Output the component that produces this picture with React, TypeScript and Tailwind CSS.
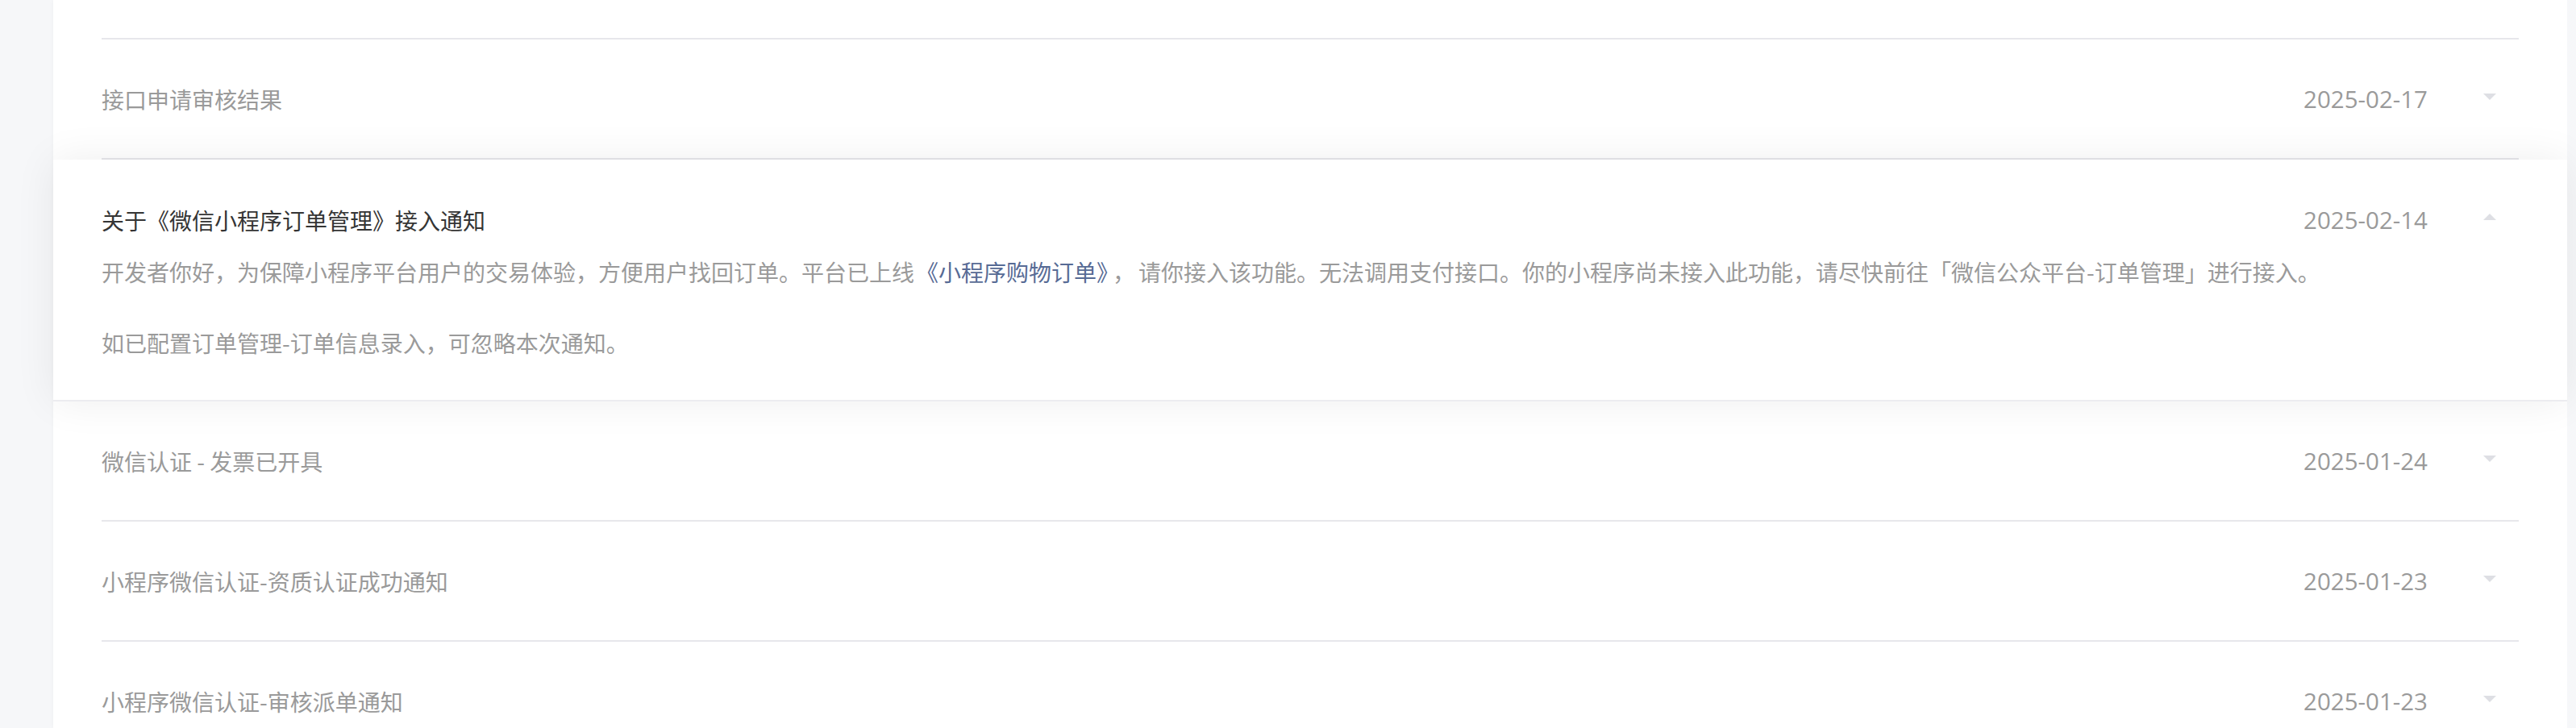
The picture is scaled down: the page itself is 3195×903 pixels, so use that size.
import React from "react";

const cjk = "font-['Noto_Sans_CJK_SC','Noto_Sans',sans-serif]";
const dateFont = "font-['Open_Sans','Noto_Sans',sans-serif]";

function Caret({ up = false }: { up?: boolean }) {
  return (
    <div className="ml-[41px] flex h-[44px] w-[72px] shrink-0 items-center justify-center">
      <svg width="16" height="8" viewBox="0 0 16 8" className={up ? "mb-[9px]" : "mb-[6px]"}>
        {up ? (
          <path d="M0 8 L16 8 L8 0 Z" fill="#dedfe4" />
        ) : (
          <path d="M0 0 L16 0 L8 8 Z" fill="#dedfe4" />
        )}
      </svg>
    </div>
  );
}

function Row({ title, date }: { title: string; date: string }) {
  return (
    <div className="px-[60px]">
      <div className="flex h-[149px] items-center border-b-2 border-[#e7e7eb]">
        <div className={`flex-1 text-[28px] leading-[44px] text-[#9a9a9a] ${cjk}`}>{title}</div>
        <div className={`text-[29.5px] leading-[44px] text-[#9a9a9a] ${dateFont}`}>{date}</div>
        <Caret />
      </div>
    </div>
  );
}

export default function App() {
  return (
    <div className="flex h-[903px] w-full overflow-hidden bg-[#f6f7f9]">
      <div className="w-[66px] shrink-0 bg-[#f6f7f9]" />
      <div className="flex min-w-0 flex-1 flex-col bg-white shadow-[0_0_6px_rgba(0,0,0,0.04)]">
        <div className="px-[60px]">
          <div className="h-[49px] border-b-2 border-[#e7e7eb]" />
        </div>
        <Row title="接口申请审核结果" date="2025-02-17" />
        <div className="relative z-10 h-[300px] shrink-0 border-b-2 border-[#ececf0] bg-white px-[60px] pt-[53px] shadow-[0_0_48px_rgba(0,0,0,0.07)]">
          <div className="flex h-[44px] items-center">
            <div className={`flex-1 text-[28px] leading-[44px] text-[#353535] ${cjk}`}>
              关于《微信小程序订单管理》接入通知
            </div>
            <div className={`text-[29.5px] leading-[44px] text-[#9a9a9a] ${dateFont}`}>2025-02-14</div>
            <Caret up />
          </div>
          <div className={`mt-[20px] text-[28px] leading-[44px] text-[#9a9a9a] ${cjk}`}>
            <p>
              开发者你好，为保障小程序平台用户的交易体验，方便用户找回订单。平台已上线
              <a className="pl-[2px] pr-[6px] text-[#576b95]">《小程序购物订单》</a>
              ，<span className="pl-[4px]">请你接入该功能。无法调用支付接口。你的小程序尚未接入此功能，请尽快前往「微信公众平台-订单管理」进行接入。</span>
            </p>
            <p className="h-[44px]"></p>
            <p>如已配置订单管理-订单信息录入，可忽略本次通知。</p>
          </div>
        </div>
        <Row title="微信认证 - 发票已开具" date="2025-01-24" />
        <Row title="小程序微信认证-资质认证成功通知" date="2025-01-23" />
        <Row title="小程序微信认证-审核派单通知" date="2025-01-23" />
      </div>
      <div className="w-[11px] shrink-0 bg-[#f6f7f9]" />
    </div>
  );
}
